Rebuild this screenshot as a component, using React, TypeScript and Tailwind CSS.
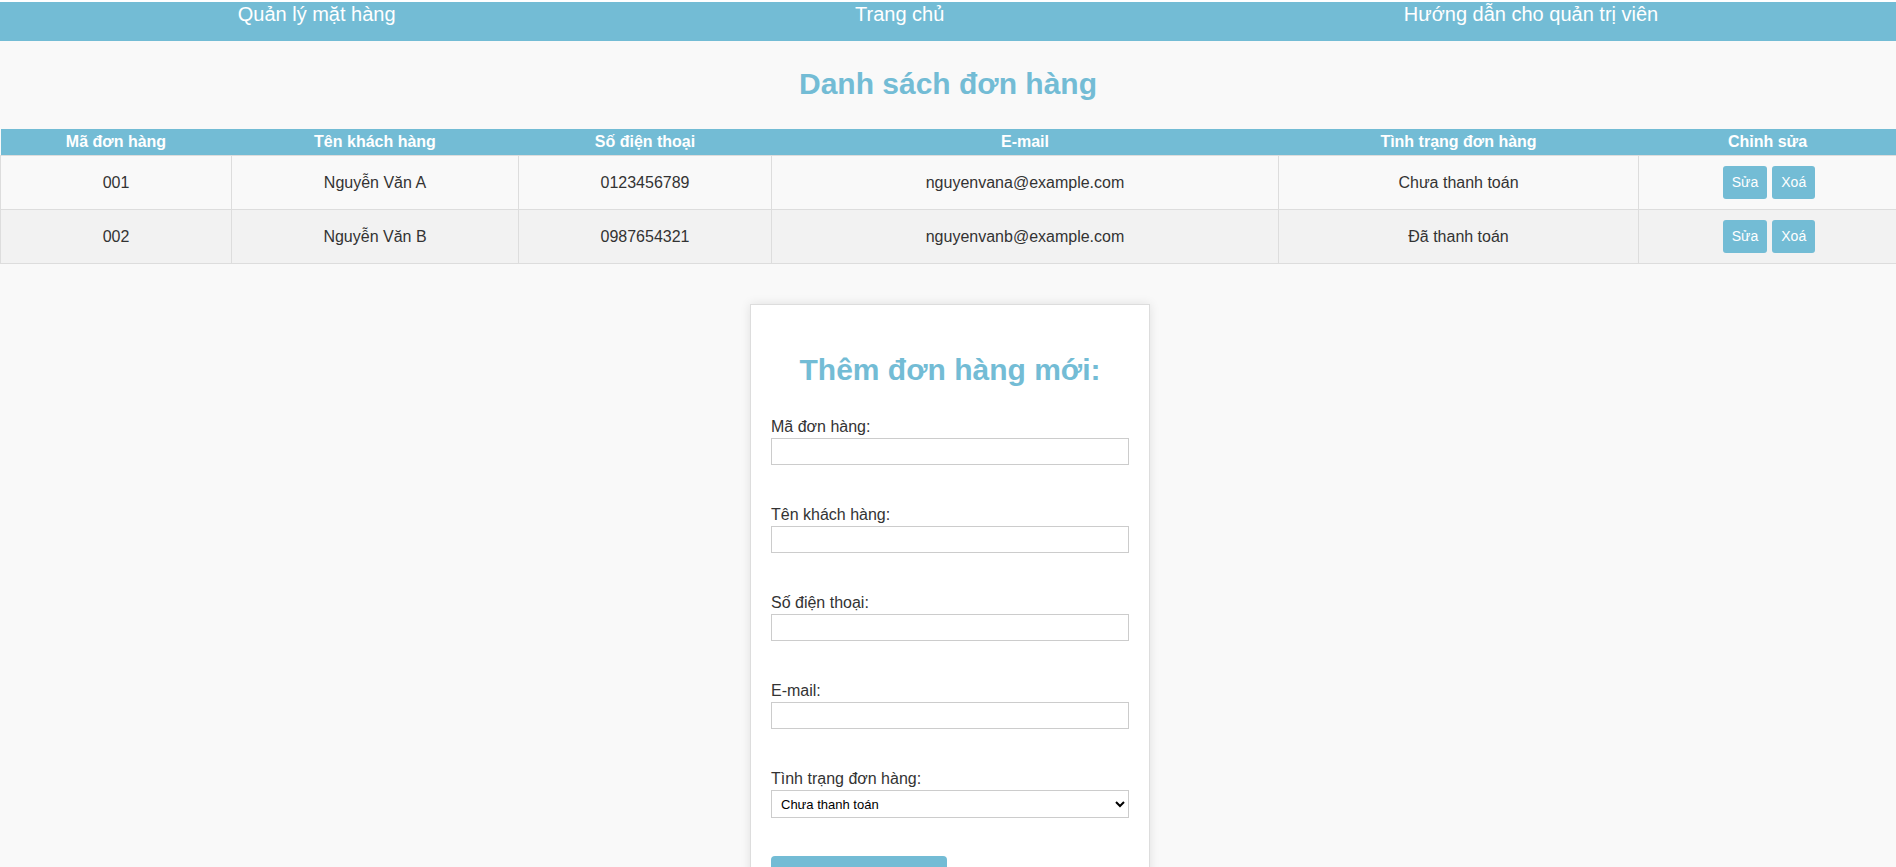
interface Order {
  id: string;
  name: string;
  phone: string;
  email: string;
  status: string;
}

const orders: Order[] = [
  {
    id: "001",
    name: "Nguyễn Văn A",
    phone: "0123456789",
    email: "nguyenvana@example.com",
    status: "Chưa thanh toán",
  },
  {
    id: "002",
    name: "Nguyễn Văn B",
    phone: "0987654321",
    email: "nguyenvanb@example.com",
    status: "Đã thanh toán",
  },
];

const columns = [
  { label: "Mã đơn hàng", className: "w-[231px]" },
  { label: "Tên khách hàng", className: "w-[287px]" },
  { label: "Số điện thoại", className: "w-[253px]" },
  { label: "E-mail", className: "w-[507px]" },
  { label: "Tình trạng đơn hàng", className: "w-[360px]" },
  { label: "Chỉnh sửa", className: "w-[258px]" },
];

const fields = ["Mã đơn hàng:", "Tên khách hàng:", "Số điện thoại:", "E-mail:"];

function NavBar() {
  return (
    <nav className="mt-[2px] h-[39px] bg-[#73bcd5]">
      <ul className="flex justify-around px-[8px] pt-[1px]">
        <li className="text-[20px] leading-[23px] text-white">Quản lý mặt hàng</li>
        <li className="text-[20px] leading-[23px] text-white">Trang chủ</li>
        <li className="text-[20px] leading-[23px] text-white">
          Hướng dẫn cho quản trị viên
        </li>
      </ul>
    </nav>
  );
}

function ActionButton({ label }: { label: string }) {
  return (
    <button className="h-[33px] rounded-[3px] bg-[#73bcd5] px-[9px] text-[14px] text-white">
      {label}
    </button>
  );
}

function OrderTable() {
  return (
    <table className="w-full table-fixed border-collapse">
      <thead>
        <tr className="bg-[#73bcd5]">
          {columns.map((c) => (
            <th
              key={c.label}
              className={`${c.className} py-[4px] text-[16px] leading-[18px] font-bold text-white`}
            >
              {c.label}
            </th>
          ))}
        </tr>
      </thead>
      <tbody>
        {orders.map((o, i) => (
          <tr key={o.id} className={i % 2 === 1 ? "bg-[#f2f2f2]" : "bg-[#f9f9f9]"}>
            <td className="border border-[#ddd] py-[10px] text-center text-[16px] text-[#333]">
              {o.id}
            </td>
            <td className="border border-[#ddd] py-[10px] text-center text-[16px] text-[#333]">
              {o.name}
            </td>
            <td className="border border-[#ddd] py-[10px] text-center text-[16px] text-[#333]">
              {o.phone}
            </td>
            <td className="border border-[#ddd] py-[10px] text-center text-[16px] text-[#333]">
              {o.email}
            </td>
            <td className="border border-[#ddd] py-[10px] text-center text-[16px] text-[#333]">
              {o.status}
            </td>
            <td className="border border-[#ddd] py-[10px] text-center">
              <div className="flex justify-center gap-[5px] pl-[3px]">
                <ActionButton label="Sửa" />
                <ActionButton label="Xoá" />
              </div>
            </td>
          </tr>
        ))}
      </tbody>
    </table>
  );
}

function OrderForm() {
  return (
    <div className="mx-auto mt-[40px] w-[400px] translate-x-[2px] border border-[#ddd] bg-white px-[20px] pt-[20px] pb-[20px] shadow-[0_0_10px_rgba(0,0,0,0.1)]">
      <h2 className="mt-[28px] mb-[31px] text-center text-[30px] leading-[34px] font-bold text-[#73bcd5]">
        Thêm đơn hàng mới:
      </h2>
      {fields.map((f) => (
        <div key={f} className="mb-[41px]">
          <label className="mb-[2px] block text-[16px] leading-[18px] text-[#333]">{f}</label>
          <input className="block h-[27px] w-full border border-[#ccc] bg-white px-[4px]" />
        </div>
      ))}
      <div>
        <label className="mb-[2px] block text-[16px] leading-[18px] text-[#333]">
          Tình trạng đơn hàng:
        </label>
        <select className="block h-[28px] w-full border border-[#ccc] bg-white pl-[5px] text-[13px] text-black">
          <option>Chưa thanh toán</option>
          <option>Đã thanh toán</option>
        </select>
      </div>
      <button className="mt-[38px] w-[176px] rounded-[4px] bg-[#73bcd5] py-[16px] text-[16px] leading-[20px] text-white">
        Thêm đơn hàng
      </button>
    </div>
  );
}

export default function App() {
  return (
    <div className="min-h-screen bg-[#f9f9f9] pb-[40px] font-['Liberation_Sans',Arial,sans-serif]">
      <NavBar />
      <h1 className="mt-[26px] mb-[28px] text-center text-[30px] leading-[34px] font-bold text-[#73bcd5]">
        Danh sách đơn hàng
      </h1>
      <OrderTable />
      <OrderForm />
    </div>
  );
}
